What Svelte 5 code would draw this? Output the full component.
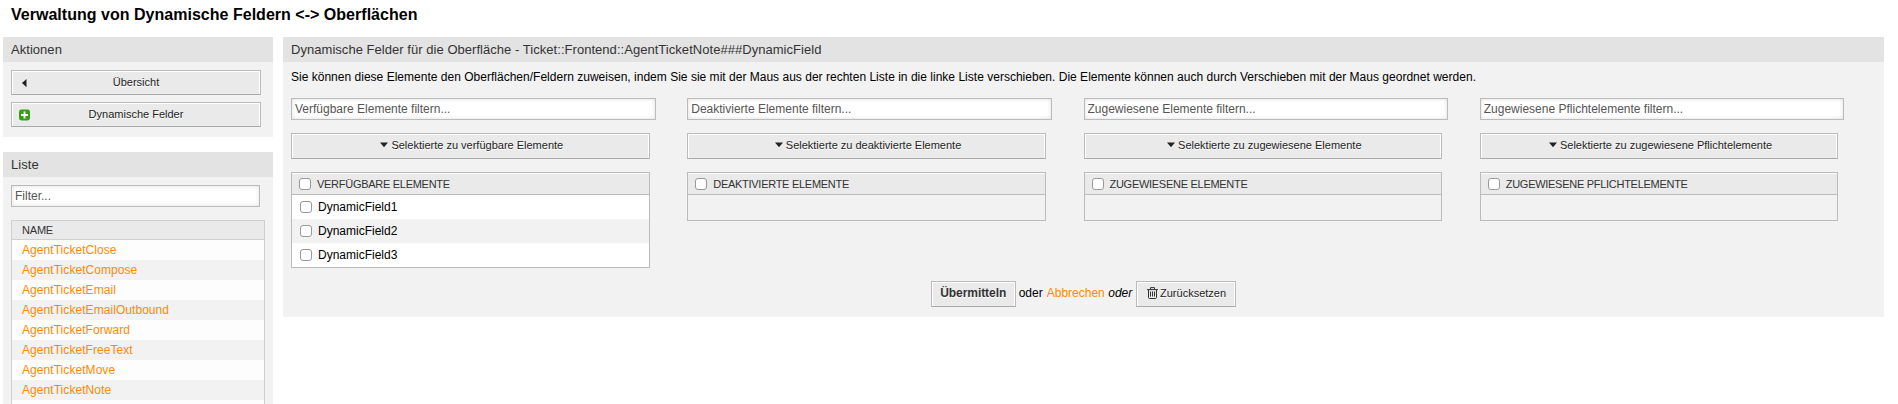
<script>
  const screens = [
    'AgentTicketClose', 'AgentTicketCompose', 'AgentTicketEmail', 'AgentTicketEmailOutbound',
    'AgentTicketForward', 'AgentTicketFreeText', 'AgentTicketMove', 'AgentTicketNote'
  ];
  const columns = [
    { filter: 'Verfügbare Elemente filtern...', action: 'Selektierte zu verfügbare Elemente', title: 'Verfügbare Elemente', items: ['DynamicField1', 'DynamicField2', 'DynamicField3'] },
    { filter: 'Deaktivierte Elemente filtern...', action: 'Selektierte zu deaktivierte Elemente', title: 'Deaktivierte Elemente', items: [] },
    { filter: 'Zugewiesene Elemente filtern...', action: 'Selektierte zu zugewiesene Elemente', title: 'Zugewiesene Elemente', items: [] },
    { filter: 'Zugewiesene Pflichtelemente filtern...', action: 'Selektierte zu zugewiesene Pflichtelemente', title: 'Zugewiesene Pflichtelemente', items: [] }
  ];
</script>

<div class="page">
  <h1>Verwaltung von Dynamische Feldern &lt;-&gt; Oberflächen</h1>
  <div class="layout">
    <aside>
      <section class="widget actions">
        <h2>Aktionen</h2>
        <div class="content">
          <button class="btn wide">
            <svg class="lead" width="11" height="12" viewBox="0 0 11 12"><path d="M7.5 2v8.2L3 6.1z" fill="#222" /></svg>
            <span>Übersicht</span>
          </button>
          <button class="btn wide">
            <svg class="lead" width="11" height="12" viewBox="0 0 11 12"><rect y=".5" width="11" height="11" rx="2.4" fill="#36a011" /><path d="M5.5 2.5v7M2 6h7" stroke="#fff" stroke-width="1.8" /></svg>
            <span>Dynamische Felder</span>
          </button>
        </div>
      </section>
      <section class="widget list">
        <h2>Liste</h2>
        <div class="content">
          <input class="field" type="text" placeholder="Filter..." />
          <div class="table">
            <div class="thead">NAME</div>
            {#each screens as screen}
              <div class="tr"><a href="#top">{screen}</a></div>
            {/each}
            <div class="tr"></div>
          </div>
        </div>
      </section>
    </aside>
    <main class="widget">
      <h2 class="main-title">Dynamische Felder für die Oberfläche - Ticket::Frontend::AgentTicketNote###DynamicField</h2>
      <div class="content">
        <p class="hint">Sie können diese Elemente den Oberflächen/Feldern zuweisen, indem Sie sie mit der Maus aus der rechten Liste in die linke Liste verschieben. Die Elemente können auch durch Verschieben mit der Maus geordnet werden.</p>
        <div class="columns">
          {#each columns as col}
            <div class="column">
              <input class="field" type="text" placeholder={col.filter} />
              <button class="btn move">
                <svg width="8" height="6" viewBox="0 0 8 6"><path d="M0 .5h8L4 5.2z" fill="#222" /></svg>
                <span>{col.action}</span>
              </button>
              <div class="box">
                <div class="box-head"><input type="checkbox" /><span>{col.title}</span></div>
                {#each col.items as item}
                  <label class="item"><input type="checkbox" /><span>{item}</span></label>
                {:else}
                  <div class="empty"></div>
                {/each}
              </div>
            </div>
          {/each}
        </div>
        <div class="footer">
          <button class="btn submit">Übermitteln</button>
          <span class="or">oder</span>
          <a class="cancel" href="#top">Abbrechen</a>
          <em>oder</em>
          <button class="btn reset">
            <svg width="11" height="12" viewBox="0 0 11 12" fill="none" stroke="#333"><path d="M0 2.6h11M3.5 2.4V.6h4v1.8M1.5 2.8v7.6q0 1.1 1.1 1.1h5.8q1.1 0 1.1-1.1V2.8M3.5 4.5v5M5.5 4.5v5M7.5 4.5v5" /></svg>
            <span>Zurücksetzen</span>
          </button>
        </div>
      </div>
    </main>
  </div>
</div>

<style>
  :global(body) { background: #fff; overflow: hidden; }
  .page { height: 404px; overflow: hidden; font: 12px/16px "Liberation Sans", Arial, sans-serif; color: #000; }
  .page * { box-sizing: border-box; }
  h1 { margin: 0; height: 37px; padding: 6px 0 0 11px; font-size: 16px; line-height: 18px; letter-spacing: .02px; white-space: nowrap; }
  .layout { display: flex; gap: 10px; align-items: flex-start; padding: 0 14px 0 3px; }
  aside { width: 270px; flex: none; display: flex; flex-direction: column; gap: 15px; }
  .widget { background: #f2f2f2; }
  h2 { margin: 0; height: 25px; padding: 0 8px; background: #e3e3e3; color: #333; font-size: 13px; font-weight: normal; line-height: 25px; letter-spacing: .04px; white-space: nowrap; }
  .content { padding: 8px; }
  .actions .content { height: 75px; display: flex; flex-direction: column; gap: 7px; }
  main { flex: 1; height: 280px; }
  .btn { display: flex; align-items: center; justify-content: center; margin: 0; padding: 0; height: 26px; background: #eaeaea; border: 1px solid #bbb; border-bottom-color: #aaa; border-radius: 0; box-shadow: inset 1px 1px 0 #fff, inset -1px 0 0 #fff; font: 11px/14px "Liberation Sans", Arial, sans-serif; color: #222; text-shadow: 0 1px 0 #fff; white-space: nowrap; }
  .wide { width: 250px; height: 25px; padding: 0 7px; }
  .wide span { flex: 1; text-align: center; padding: 0 11px 2px 0; }
  .lead { flex: none; }
  .field { display: block; height: 22px; margin: 0; padding: 0 3px; border: 1px solid #bbb; border-radius: 0; background: #fff; box-shadow: inset 0 0 4px #ddd; font: 12px/16px "Liberation Sans", Arial, sans-serif; outline: 0; }
  .field::placeholder { color: #555; opacity: 1; }
  .list .field { width: 249px; }
  .table { width: 254px; margin-top: 13px; border: 1px solid #d0d0d0; }
  .thead { height: 19px; padding: 0 10px; background: #eaeaea; border-bottom: 1px solid #d0d0d0; font-size: 11px; line-height: 19px; letter-spacing: -.2px; color: #333; }
  .tr { height: 20px; padding: 0 10px; line-height: 20px; letter-spacing: .06px; background: #fdfdfd; }
  .tr:nth-child(odd) { background: #f2f2f2; }
  a { color: #ff8a00; text-decoration: none; }
  .hint { margin: 0; height: 28px; line-height: 14px; letter-spacing: .014px; white-space: nowrap; }
  .columns { display: grid; grid-template-columns: repeat(4, 1fr); }
  .column .field { width: 364.6px; }
  .move { width: 358.6px; margin-top: 13px; padding: 0 0 2px 3px; gap: 3px; }
  .box { width: 358.6px; margin-top: 13px; border: 1px solid #bbb; }
  .box-head { height: 22px; display: flex; align-items: center; gap: 6px; padding-left: 7px; background: #eaeaea; border-bottom: 1px solid #bbb; box-shadow: inset 0 1px 0 #fff; font-size: 11px; letter-spacing: -.28px; text-transform: uppercase; color: #333; }
  .item { height: 24px; display: flex; align-items: center; gap: 6px; padding-left: 8px; background: #fff; }
  .item:nth-child(odd) { background: #f2f2f2; }
  .empty { height: 25px; }
  input[type='checkbox'] { appearance: none; flex: none; width: 12px; height: 12px; margin: 0; border: 1px solid #999; border-radius: 3px; background: #fff; }
  .footer { display: flex; align-items: center; justify-content: center; margin-top: 13px; }
  .submit { width: 85px; padding-bottom: 2px; font-weight: bold; font-size: 12px; letter-spacing: -.05px; color: #333; }
  .or { margin: -2px 0 0 3px; }
  .cancel { margin: -2px 0 0 4px; }
  em { margin: -2px 4px 0 3.5px; }
  .reset { width: 100px; padding-bottom: 2px; gap: 2.5px; }
</style>
